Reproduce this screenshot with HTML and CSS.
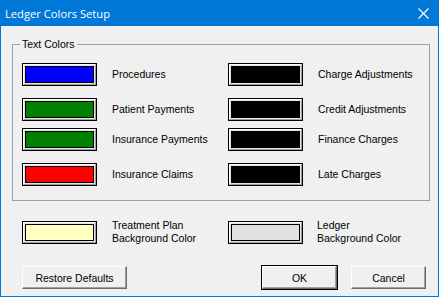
FILE: index.html
```html
<!DOCTYPE html>
<html lang="en">
<head>
    <meta charset="UTF-8">
    <title>Ledger Colors Setup</title>
    <link rel="stylesheet" href="styles.css">
</head>
<body>
    <div class="window">
        <div class="titlebar">
            <span class="title">Ledger Colors Setup</span>
            <svg class="close" width="11" height="11" viewBox="0 0 11 11">
                <path d="M0.5 0.5 L10.5 10.5 M10.5 0.5 L0.5 10.5" stroke="#fff" stroke-width="1.1" fill="none"/>
            </svg>
        </div>
        <div class="content">
            <fieldset class="group">
                <legend>Text Colors</legend>
                <div class="row r1">
                    <div class="item"><span class="swatch"><i class="blue"></i></span><span class="label">Procedures</span></div>
                    <div class="item"><span class="swatch"><i class="black"></i></span><span class="label">Charge Adjustments</span></div>
                </div>
                <div class="row r2">
                    <div class="item"><span class="swatch"><i class="green"></i></span><span class="label">Patient Payments</span></div>
                    <div class="item"><span class="swatch"><i class="black"></i></span><span class="label">Credit Adjustments</span></div>
                </div>
                <div class="row r3">
                    <div class="item"><span class="swatch"><i class="green"></i></span><span class="label">Insurance Payments</span></div>
                    <div class="item"><span class="swatch"><i class="black"></i></span><span class="label">Finance Charges</span></div>
                </div>
                <div class="row r4">
                    <div class="item"><span class="swatch"><i class="red"></i></span><span class="label">Insurance Claims</span></div>
                    <div class="item"><span class="swatch"><i class="black"></i></span><span class="label">Late Charges</span></div>
                </div>
            </fieldset>
            <div class="row bg-row">
                <div class="item"><span class="swatch"><i class="yellow"></i></span><span class="label">Treatment Plan<br>Background Color</span></div>
                <div class="item"><span class="swatch"><i class="grey"></i></span><span class="label">Ledger<br>Background Color</span></div>
            </div>
            <div class="buttons">
                <button class="btn wide">Restore Defaults</button>
                <button class="btn default">OK</button>
                <button class="btn">Cancel</button>
            </div>
        </div>
    </div>
</body>
</html>
```

FILE: styles.css
```css
*{
    margin: 0;
    padding: 0;
    box-sizing: border-box;
}
body{
    background-color: #f0f0f0;
    font-family: "Liberation Sans", Arial, sans-serif;
    font-size: 10.5px;
    color: #000;
}
.window{
    width: 439px;
    height: 297px;
    border: 1px solid #0078d7;
    border-top: none;
    background-color: #f0f0f0;
}
.titlebar{
    display: flex;
    align-items: center;
    justify-content: space-between;

    height: 26px;
    margin: 0 -1px;
    padding: 0 10px 0 5px;
    background-color: #0078d7;
    color: #fff;
}
.title{
    font-family: "Open Sans", "Noto Sans", sans-serif;
    font-size: 11.2px;
}
.close{
    display: block;
}
.content{
    padding: 0 8px 0 11px;
}
.group{
    margin-top: 12px;
    padding: 0 0 14px 9px;
    border: 1px solid #a0a0a0;
}
.group > legend{
    margin-left: -2px;
    padding: 0 2px;
    line-height: 13px;
}
.row{
    display: grid;
    grid-template-columns: 206px 1fr;
}
.r1{
    margin-top: 12px;
}
.r2{
    margin-top: 12px;
}
.r3{
    margin-top: 7px;
}
.r4{
    margin-top: 12px;
}
.item{
    display: flex;
    align-items: center;
}
.swatch{
    display: block;
    flex-shrink: 0;
    width: 75px;
    height: 23px;
    border: 1px solid #000;
}
.swatch > i{
    display: block;
    width: 100%;
    height: 100%;
    border: 1px solid #fff;
    border-right-color: #a0a0a0;
    border-bottom-color: #a0a0a0;
    box-shadow: inset 0 0 0 1px #e3e3e3, inset 0 0 0 2px #000;
}
.blue{ background-color: #0000ff; }
.green{ background-color: #008000; }
.red{ background-color: #ff0000; }
.black{ background-color: #000; }
.yellow{ background-color: #ffffc0; }
.grey{ background-color: #e0e0e0; }
.label{
    margin-left: 15px;
    line-height: 13px;
}
.bg-row{
    margin-top: 18px;
    padding-left: 10px;
}
.bg-row .item:last-child .label{
    margin-left: 14px;
}
.buttons{
    display: flex;
    margin-top: 21px;
    padding: 0 4px 0 10px;
}
.btn{
    width: 75px;
    height: 23px;
    font-family: "Liberation Sans", Arial, sans-serif;
    font-size: 10.5px;
    color: #000;
    background-color: #f0f0f0;
    border: 1px solid;
    border-color: #fff #696969 #696969 #fff;
    box-shadow: inset -1px -1px 0 #a0a0a0;
}
.btn.wide{
    width: 105px;
    margin-right: auto;
}
.btn.default{
    margin-right: 14px;
    outline: 1px solid #000;
}
```
